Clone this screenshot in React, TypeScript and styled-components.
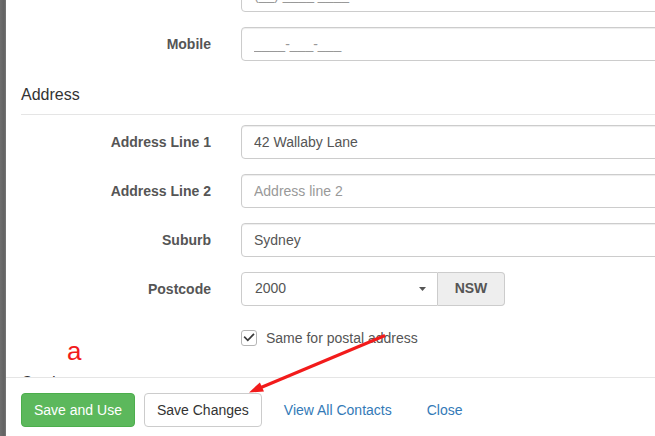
import React from "react";
import styled, { createGlobalStyle } from "styled-components";

const GlobalStyle = createGlobalStyle`
  html, body { margin: 0; padding: 0; background: #fff; overflow: hidden; }
  body {
    font-family: "Liberation Sans", Arial, Helvetica, sans-serif;
    font-size: 14px;
    line-height: 1.42857;
    color: #333;
  }
  * { box-sizing: border-box; }
`;

const Page = styled.div`
  position: relative;
  display: flex;
  width: 655px;
  height: 436px;
  overflow: hidden;
`;

const SideBar = styled.div`
  flex: 0 0 6px;
  background: linear-gradient(to right, #6e6e6e, #626262 70%, #7a7a7a);
`;

const Modal = styled.div`
  flex: 1;
  min-width: 0;
  display: flex;
  flex-direction: column;
  overflow: hidden;
`;

const Body = styled.div`
  flex: 0 0 377px;
  height: 377px;
  overflow: hidden;
  padding-left: 15px;
`;

const Scroller = styled.div`
  display: flex;
  flex-direction: column;
  margin-top: -22px;
`;

const FormRow = styled.div`
  display: grid;
  grid-template-columns: 190px 1fr;
  column-gap: 30px;
  align-items: center;
  margin-bottom: 15px;
`;

const Label = styled.label`
  text-align: right;
  font-weight: bold;
  color: #555;
  line-height: 20px;
`;

const TextInput = styled.input<{ $mask?: boolean }>`
  display: block;
  width: 480px;
  height: 34px;
  padding: 6px 12px;
  font-family: inherit;
  font-size: 14px;
  line-height: 20px;
  color: ${(p) => (p.$mask ? "#999" : "#555")};
  background: #fff;
  border: 1px solid #ccc;
  border-radius: 4px;
  box-shadow: inset 0 1px 1px rgba(0, 0, 0, 0.075);
  outline: none;
  &::placeholder { color: #999; }
`;

const SectionTitle = styled.div`
  margin: 7px 0 10px;
  padding-bottom: 8px;
  font-size: 16px;
  line-height: 23px;
  color: #333;
  border-bottom: 1px solid #e5e5e5;
`;

const InputGroup = styled.div`
  display: flex;
  width: 264px;
`;

const SelectBox = styled.div`
  display: flex;
  align-items: center;
  justify-content: space-between;
  width: 197px;
  height: 34px;
  padding: 0 11px 0 13px;
  color: #555;
  background: #fff;
  border: 1px solid #ccc;
  border-radius: 4px 0 0 4px;
`;

const Addon = styled.div`
  display: flex;
  align-items: center;
  justify-content: center;
  width: 67px;
  height: 34px;
  font-weight: bold;
  color: #555;
  background: #eee;
  border: 1px solid #ccc;
  border-left: none;
  border-radius: 0 4px 4px 0;
`;

const CheckRow = styled.div`
  display: grid;
  grid-template-columns: 190px 1fr;
  column-gap: 30px;
  padding: 7px 0;
  margin-bottom: 9px;
`;

const CheckLabel = styled.label`
  display: flex;
  align-items: flex-start;
  gap: 9px;
  line-height: 20px;
  color: #555;
`;

const CheckBox = styled.span`
  flex: 0 0 16px;
  width: 16px;
  height: 16px;
  margin-top: 2px;
  border: 1px solid #b5b5b5;
  border-radius: 3px;
  background: #fff;
  display: flex;
  align-items: center;
  justify-content: center;
`;

const Footer = styled.div`
  flex: 0 0 auto;
  display: flex;
  align-items: center;
  gap: 9px;
  padding: 15px;
  border-top: 1px solid #e5e5e5;
`;

const Button = styled.button<{ $variant: "success" | "default" | "link" }>`
  height: 34px;
  padding: 6px 12px;
  font-family: inherit;
  font-size: 14px;
  line-height: 20px;
  border-radius: 4px;
  white-space: nowrap;
  cursor: pointer;
  border: 1px solid
    ${(p) =>
      p.$variant === "success" ? "#4cae4c" : p.$variant === "default" ? "#ccc" : "transparent"};
  background: ${(p) =>
    p.$variant === "success" ? "#5cb85c" : p.$variant === "default" ? "#fff" : "transparent"};
  color: ${(p) =>
    p.$variant === "success" ? "#fff" : p.$variant === "default" ? "#333" : "#337ab7"};
`;

const Annotation = styled.span`
  position: absolute;
  left: 67px;
  top: 338px;
  font-family: "Liberation Sans", Arial, sans-serif;
  font-size: 26px;
  line-height: 1;
  color: #f21b1b;
`;

const Overlay = styled.svg`
  position: absolute;
  left: 0;
  top: 0;
  pointer-events: none;
`;

const Caret = () => (
  <svg width="7" height="4" viewBox="0 0 7 4">
    <polygon points="0,0 7,0 3.5,4" fill="#555" />
  </svg>
);

const Check = () => (
  <svg width="14" height="14" viewBox="0 0 16 16">
    <polyline
      points="3.2,7.2 6.6,10.6 13,4"
      fill="none"
      stroke="#3a3a3a"
      strokeWidth="2"
      strokeLinecap="square"
    />
  </svg>
);

export default function App() {
  return (
    <>
      <GlobalStyle />
      <Page>
        <SideBar />
        <Modal>
          <Body>
            <Scroller>
              <FormRow>
                <span />
                <TextInput $mask readOnly value="(__) ____ ____" />
              </FormRow>
              <FormRow>
                <Label>Mobile</Label>
                <TextInput $mask readOnly value="____-___-___" />
              </FormRow>

              <SectionTitle>Address</SectionTitle>

              <FormRow>
                <Label>Address Line 1</Label>
                <TextInput readOnly value="42 Wallaby Lane" />
              </FormRow>
              <FormRow>
                <Label>Address Line 2</Label>
                <TextInput readOnly placeholder="Address line 2" />
              </FormRow>
              <FormRow>
                <Label>Suburb</Label>
                <TextInput readOnly value="Sydney" />
              </FormRow>
              <FormRow>
                <Label>Postcode</Label>
                <InputGroup>
                  <SelectBox>
                    <span>2000</span>
                    <Caret />
                  </SelectBox>
                  <Addon>NSW</Addon>
                </InputGroup>
              </FormRow>
              <CheckRow>
                <span />
                <CheckLabel>
                  <CheckBox>
                    <Check />
                  </CheckBox>
                  Same for postal address
                </CheckLabel>
              </CheckRow>

              <SectionTitle>Card</SectionTitle>
            </Scroller>
          </Body>
          <Footer>
            <Button $variant="success">Save and Use</Button>
            <Button $variant="default">Save Changes</Button>
            <Button $variant="link">View All Contacts</Button>
            <Button $variant="link">Close</Button>
          </Footer>
        </Modal>

        <Annotation>a</Annotation>
        <Overlay width="655" height="436" viewBox="0 0 655 436">
          <line x1="385" y1="335.5" x2="261" y2="387.5" stroke="#f21b1b" strokeWidth="3" />
          <polygon points="249,392.5 264,391.6 259.9,382.4" fill="#f21b1b" />
        </Overlay>
      </Page>
    </>
  );
}
